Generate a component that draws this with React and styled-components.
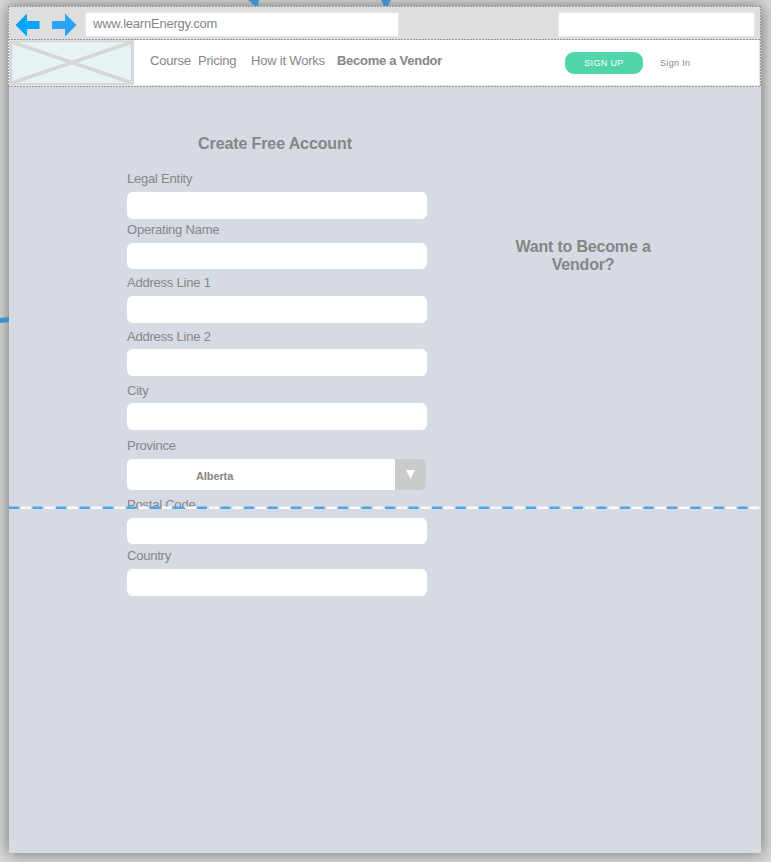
import React from "react";
import styled, { createGlobalStyle } from "styled-components";

const GlobalStyle = createGlobalStyle`
  * { box-sizing: border-box; }
  body {
    margin: 0;
    background: #d9d9d9;
    color: #868686;
    font-family: "Liberation Sans", Arial, sans-serif;
    font-size: 13px;
    line-height: 15px;
    letter-spacing: -0.22px;
  }
`;

const Canvas = styled.div`
  position: relative;
  width: 771px;
  height: 862px;
  padding: 6px 9px 9px 8px;
  overflow: hidden;
`;

const Connectors = styled.svg`
  position: absolute;
  left: 0;
  top: 0;
`;

const Window = styled.main`
  position: relative;
  display: flex;
  flex-direction: column;
  height: 847px;
  width: 753px;
`;

const Shade = styled.div`
  position: absolute;
  inset: 1px 0 0 1px;
  box-shadow: 0 0 15px 1px rgba(0, 0, 0, 0.46);
`;

const Dotted = styled.svg`
  position: absolute;
  inset: 0;
  width: 754px;
  height: 100%;
`;

const Toolbar = styled.header`
  position: relative;
  display: flex;
  align-items: flex-start;
  height: 34px;
  padding: 6px 7px 0 6px;
  background: #dedede;
`;

const Arrow = styled.svg`
  flex: none;
  margin-right: ${(p) => p.$gap}px;
`;

const UrlBox = styled.div`
  width: ${(p) => p.$width}px;
  height: 23px;
  margin: 1px 0 0 ${(p) => p.$left || 0}px;
  padding: 3px 7px;
  background: #fff;
  box-shadow: 0 0 0 1px #e6e6e6;
`;

const Nav = styled.nav`
  position: relative;
  display: flex;
  align-items: flex-start;
  height: 47px;
  background: #fff;
  box-shadow: inset -2px -2px 0 #e9e9e9;
`;

const Logo = styled.svg`
  flex: none;
  width: 126px;
  height: 46px;
`;

const NavLink = styled.a`
  margin: 13px 0 0 ${(p) => p.$left}px;
  width: ${(p) => p.$width}px;
  font-weight: ${(p) => (p.$bold ? 700 : 400)};
  letter-spacing: ${(p) => (p.$bold ? -0.27 : -0.2)}px;
  white-space: nowrap;
`;

const SignUp = styled.button`
  width: 78px;
  height: 22px;
  margin: 12px 0 0 123px;
  padding: 0;
  border: 0;
  border-radius: 9px;
  background: #4fd5a9;
  color: #fff;
  font: 9px/22px "Liberation Sans", Arial, sans-serif;
  letter-spacing: 0.35px;
`;

const SignIn = styled.a`
  margin: 17px 0 0 17px;
  font-size: 9px;
  line-height: 12px;
  letter-spacing: 0.35px;
`;

const Content = styled.section`
  position: relative;
  display: flex;
  flex: 1;
  align-items: flex-start;
  margin-left: 1px;
  padding-left: 118px;
  background: #d6dae2;
`;

const Form = styled.form`
  width: 300px;
  padding-top: 48px;
`;

const Title = styled.h1`
  margin: 0 4px 18px 0;
  font-size: 16px;
  line-height: 18px;
  letter-spacing: -0.11px;
  text-align: center;
`;

const Field = styled.label`
  display: flex;
  flex-direction: column;
  gap: ${(p) => p.$gap}px;
  margin-top: ${(p) => p.$top}px;
`;

const Input = styled.input`
  width: 300px;
  height: ${(p) => p.$height}px;
  padding: 0 8px;
  border: 0;
  border-radius: 6px;
  background: #fff;
  box-shadow: 0 0 1px rgba(255, 255, 255, 0.6);
`;

const Select = styled.div`
  display: flex;
  width: 299px;
  height: 31px;
  border-radius: 5px;
  overflow: hidden;
  background: #fff;
`;

const SelectValue = styled.span`
  flex: 1;
  padding-left: 69px;
  font-size: 11px;
  font-weight: 700;
  line-height: 34px;
  letter-spacing: -0.1px;
`;

const SelectToggle = styled.span`
  display: flex;
  justify-content: center;
  width: 31px;
  padding-top: 11px;
  background: #cbcbcb;
`;

const Promo = styled.h2`
  width: 150px;
  margin: 151px 0 0 81px;
  font-size: 16px;
  line-height: 18px;
  letter-spacing: -0.18px;
  text-align: center;
`;

const FoldLine = styled.svg`
  position: absolute;
  left: 0;
  top: 419px;
`;

const fields = [
  { label: "Legal Entity", top: 0, gap: 6, height: 27 },
  { label: "Operating Name", top: 3, gap: 6, height: 26 },
  { label: "Address Line 1", top: 6, gap: 6, height: 27 },
  { label: "Address Line 2", top: 6, gap: 5, height: 27 },
  { label: "City", top: 7, gap: 5, height: 27 },
  { label: "Province", top: 8, gap: 6, value: "Alberta" },
  { label: "Postal Code", top: 7, gap: 6, height: 26 },
  { label: "Country", top: 4, gap: 6, height: 27 },
];

export default function App() {
  return (
    <>
      <GlobalStyle />
      <Canvas>
        <Window>
          <Shade />
          <Toolbar>
            <Arrow width="26" height="26" viewBox="0 0 26 26" $gap={11}>
              <path d="M1.5 13 13 1.5V9h12.5v8H13v7.5z" fill="#03a5ff" />
            </Arrow>
            <Arrow width="26" height="26" viewBox="0 0 26 26" $gap={9}>
              <path d="M25.5 13 14 1.5V9H1v8h13v7.5z" fill="#2ba2fb" />
            </Arrow>
            <UrlBox $width={312}>www.learnEnergy.com</UrlBox>
            <UrlBox $width={195} $left={161} />
          </Toolbar>
          <Nav>
            <Logo viewBox="0 0 126 46">
              <rect x="2.5" y="1.5" width="122" height="43" fill="#e5f3f4" />
              <path d="M4 2 124 43M4 43 124 2" stroke="#d6d6d6" strokeWidth="3.5" />
              <path d="M2 1.2H126M2 44H126" stroke="#d6d6d6" strokeWidth="2" />
              <path d="M2.7 1V45M124.5 1V45" stroke="#d6d6d6" strokeWidth="3" />
            </Logo>
            <NavLink $left={16} $width={40}>Course</NavLink>
            <NavLink $left={8} $width={39}>Pricing</NavLink>
            <NavLink $left={14} $width={74}>How it Works</NavLink>
            <NavLink $left={12} $width={105} $bold>Become a Vendor</NavLink>
            <SignUp>SIGN UP</SignUp>
            <SignIn>Sign In</SignIn>
          </Nav>
          <Content>
            <Form>
              <Title>Create Free Account</Title>
              {fields.map((f) => (
                <Field key={f.label} $top={f.top} $gap={f.gap}>
                  {f.label}
                  {f.value ? (
                    <Select>
                      <SelectValue>{f.value}</SelectValue>
                      <SelectToggle>
                        <svg width="9" height="9"><path d="M0 0h9L4.5 9z" fill="#fff" /></svg>
                      </SelectToggle>
                    </Select>
                  ) : (
                    <Input $height={f.height} />
                  )}
                </Field>
              ))}
            </Form>
            <Promo>Want to Become a Vendor?</Promo>
            <FoldLine width="752" height="3">
              <path d="M0 1.7H752" stroke="#4ba6ee" strokeWidth="2.4" strokeDasharray="10 13.5" />
              <path d="M12 1.7H752" stroke="#fafafa" strokeWidth="2.4" strokeDasharray="10 13.5" />
            </FoldLine>
          </Content>
          <Dotted fill="none" stroke="#999" strokeDasharray="2 1">
            <path d="M0 .5H753M0 33.5H753M0 80.5H753M.5 0V81M752.5 0V81" />
          </Dotted>
        </Window>
        <Connectors width="771" height="862" fill="#408fc8">
          <path d="M248 0h11l-1 6h-3zM381 0h10l-3 6h-4zM0 318l9-1v5l-9 1z" />
        </Connectors>
      </Canvas>
    </>
  );
}
